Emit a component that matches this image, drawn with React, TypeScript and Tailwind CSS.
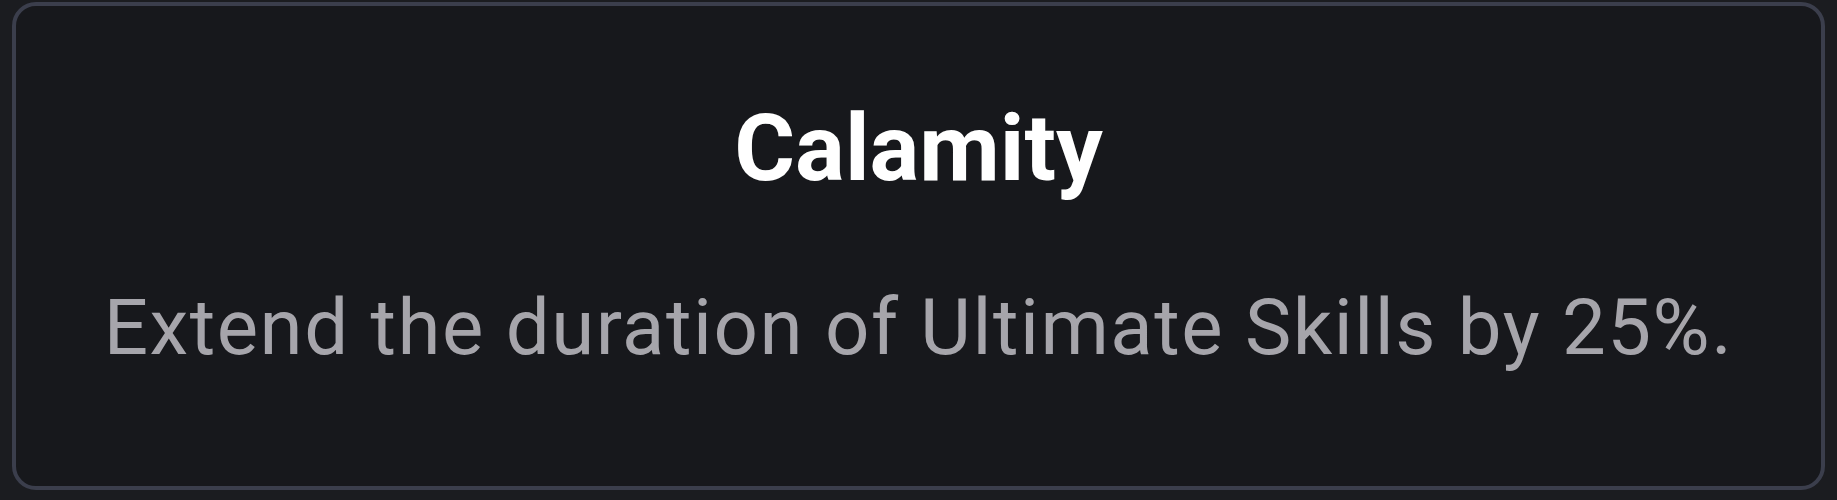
import React from "react";

export default function App() {
  return (
    <div className="w-[1837px] h-[500px] bg-[#1b1c20] pl-[12px] pt-[2px] pr-[12px] pb-[10px] font-['Roboto',sans-serif]">
      <div className="h-[488px] w-[1813px] rounded-[24px] border-[4px] border-[#3b3e4c] bg-[#17181c] flex flex-col items-center pt-[88px]">
        <h1 className="text-[93px] leading-[110px] font-bold text-white">Calamity</h1>
        <p className="mt-[79px] text-[78px] leading-[90px] tracking-[1.5px] text-[#a6a5ab]">
          Extend the duration of Ultimate Skills by 25%.
        </p>
      </div>
    </div>
  );
}
